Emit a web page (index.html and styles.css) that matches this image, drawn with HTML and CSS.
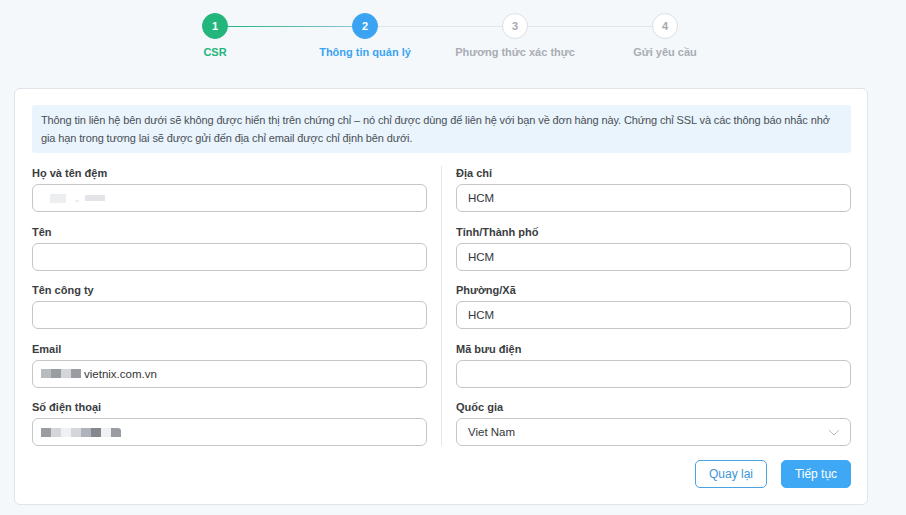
FILE: index.html
```html
<!DOCTYPE html>
<html lang="vi">
<head>
    <meta charset="UTF-8">
    <meta name="viewport" content="width=device-width, initial-scale=1.0">
    <title>Thông tin quản lý</title>
    <link rel="stylesheet" href="styles.css">
</head>
<body>

    <!-- Steps -->
    <div class="steps">
        <div class="step done">
            <div class="dot">1</div>
            <div class="step-name">CSR</div>
        </div>
        <div class="step active">
            <div class="dot">2</div>
            <div class="step-name">Thông tin quản lý</div>
        </div>
        <div class="step">
            <div class="dot">3</div>
            <div class="step-name">Phương thức xác thực</div>
        </div>
        <div class="step last">
            <div class="dot">4</div>
            <div class="step-name">Gửi yêu cầu</div>
        </div>
    </div>

    <div class="card">
        <div class="notice">
            Thông tin liên hệ bên dưới sẽ không được hiển thị trên chứng chỉ – nó chỉ được dùng để liên hệ với bạn về đơn hàng này. Chứng chỉ SSL và các thông báo nhắc nhở gia hạn trong tương lai sẽ được gửi đến địa chỉ email được chỉ định bên dưới.
        </div>

        <div class="form">
            <div class="col">
                <div class="field">
                    <label>Họ và tên đệm</label>
                    <div class="input">
                        <span class="mask">
                            <i class="m-gap"></i><i class="m1"></i><i class="m1"></i><i class="m-gap"></i><i class="m-dot"></i><i class="m2"></i><i class="m2"></i>
                        </span>
                    </div>
                </div>
                <div class="field">
                    <label>Tên</label>
                    <div class="input"></div>
                </div>
                <div class="field">
                    <label>Tên công ty</label>
                    <div class="input"></div>
                </div>
                <div class="field">
                    <label>Email</label>
                    <div class="input">
                        <span class="mask spaced">
                            <i class="g3"></i><i class="g5"></i><i class="g2"></i><i class="g5"></i>
                        </span>vietnix.com.vn
                    </div>
                </div>
                <div class="field">
                    <label>Số điện thoại</label>
                    <div class="input">
                        <span class="mask">
                            <i class="g5"></i><i class="g2"></i><i class="g1"></i><i class="g2"></i><i class="g4"></i><i class="g6"></i><i class="g1"></i><i class="g5 end"></i>
                        </span>
                    </div>
                </div>
            </div>

            <div class="divider"></div>

            <div class="col">
                <div class="field">
                    <label>Địa chỉ</label>
                    <div class="input">HCM</div>
                </div>
                <div class="field">
                    <label>Tỉnh/Thành phố</label>
                    <div class="input">HCM</div>
                </div>
                <div class="field">
                    <label>Phường/Xã</label>
                    <div class="input">HCM</div>
                </div>
                <div class="field">
                    <label>Mã bưu điện</label>
                    <div class="input"></div>
                </div>
                <div class="field">
                    <label>Quốc gia</label>
                    <div class="input select">
                        <span>Viet Nam</span>
                        <svg width="12" height="7" viewBox="0 0 12 7"><path d="M1 1l5 5 5-5" fill="none" stroke="#b9bec4" stroke-width="1"/></svg>
                    </div>
                </div>
            </div>
        </div>

        <div class="actions">
            <button class="btn btn-outline">Quay lại</button>
            <button class="btn btn-primary">Tiếp tục</button>
        </div>
    </div>

</body>
</html>
```

FILE: styles.css
```css
body {
    margin: 0;
    background-color: #f4f8fb;
    font-family: "Liberation Sans", Arial, sans-serif;
    color: #333;
}

/* Steps */
.steps {
    display: flex;
    margin-left: 140px;
    padding-top: 13px;
    width: 600px;
}

.step {
    position: relative;
    width: 150px;
    display: flex;
    flex-direction: column;
    align-items: center;
}

/* line to the next step */
.step::after {
    content: "";
    position: absolute;
    top: 13px;
    left: 88px;
    width: 124px;
    height: 1px;
    background-color: #e2e6ea;
}

.step.done::after {
    background: linear-gradient(to right, #22b57c, #8cc4d6);
}

.step.last::after {
    display: none;
}

.dot {
    width: 24px;
    height: 24px;
    border-radius: 50%;
    border: 1px solid #dcdfe3;
    background-color: #fff;
    color: #a5a9ae;
    font-size: 11px;
    font-weight: bold;
    display: flex;
    justify-content: center;
    align-items: center;
}

.step-name {
    margin-top: 7px;
    font-size: 11px;
    font-weight: bold;
    color: #a8adb3;
    white-space: nowrap;
}

.step.done .dot {
    background-color: #22b57c;
    border-color: #22b57c;
    color: #fff;
}

.step.done .step-name {
    color: #22b57c;
}

.step.active .dot {
    background-color: #3ba4f2;
    border-color: #3ba4f2;
    color: #fff;
}

.step.active .step-name {
    color: #3ba4f2;
}

/* Card */
.card {
    margin: 30px 0 0 14px;
    width: 819px;
    padding: 16px 16px 16px 17px;
    background-color: #fff;
    border: 1px solid #e0e4e8;
    border-radius: 6px;
}

.notice {
    background-color: #e9f4fd;
    border-radius: 3px;
    padding: 6px 9px;
    font-size: 11px;
    letter-spacing: -0.12px;
    line-height: 18px;
    color: #4a4f55;
}

.form {
    display: flex;
    gap: 14px;
    margin-top: 13px;
}

.col {
    flex: 1;
    display: flex;
    flex-direction: column;
    gap: 12.5px;
}

.divider {
    width: 1px;
    background-color: #e3e6ea;
}

.field label {
    display: block;
    font-size: 11px;
    font-weight: bold;
    line-height: 14px;
    margin-bottom: 4px;
    color: #3a3d41;
}

.input {
    height: 26px;
    border: 1px solid #c3c7cc;
    border-radius: 6px;
    padding: 0 11px;
    display: flex;
    align-items: center;
    font-size: 11.5px;
    color: #33363a;
}

.select {
    justify-content: space-between;
    padding-right: 10px;
}

/* blurred values */
.mask {
    display: flex;
    align-items: center;
    margin-left: -3px;
}

.mask.spaced {
    margin-right: 3px;
}

.mask i {
    display: inline-block;
    width: 10px;
    height: 9px;
}

.mask .end {
    border-top-right-radius: 3px;
}

.mask .m-gap { width: 9px; }
.mask .m1 { background-color: #eceef0; width: 8px; }
.mask .m-dot { width: 4px; height: 2px; background-color: #eee; margin: 6px 6px 0 0; }
.mask .m2 { background-color: #e3e4e8; height: 6px; }

.g1 { background-color: #eff0f2; }
.g2 { background-color: #d4d6da; }
.g3 { background-color: #b8bbc0; }
.g4 { background-color: #b0b2bb; }
.g5 { background-color: #999ca1; }
.g6 { background-color: #85878c; }

/* Buttons */
.actions {
    display: flex;
    justify-content: flex-end;
    gap: 14px;
    margin-top: 14px;
}

.btn {
    height: 28px;
    border-radius: 5px;
    font-family: "Liberation Sans", Arial, sans-serif;
    font-size: 12px;
    cursor: pointer;
}

.btn-outline {
    width: 72px;
    background-color: #fff;
    border: 1px solid #4aa3df;
    color: #3b95d6;
}

.btn-primary {
    width: 70px;
    background-color: #3ea8f5;
    border: 1px solid #3ea8f5;
    color: #fff;
}
```
